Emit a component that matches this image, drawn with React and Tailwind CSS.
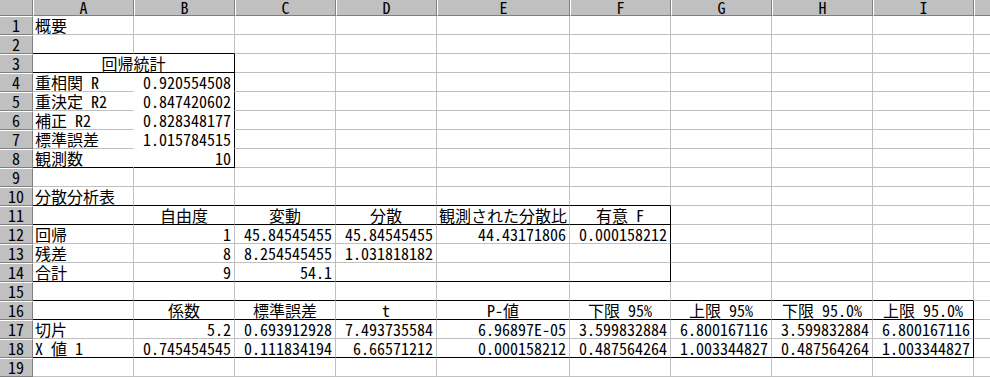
import React from "react";

const COLS = ["A", "B", "C", "D", "E", "F", "G", "H", "I", "J"];

// cell contents: [row, col] -> { v, align }
const L = (v) => ({ v, align: "left" });
const R = (v) => ({ v, align: "right" });
const C = (v) => ({ v, align: "center" });

const DATA = {
  1: { 0: L("概要") },
  4: { 0: L("重相関 R"), 1: R("0.920554508") },
  5: { 0: L("重決定 R2"), 1: R("0.847420602") },
  6: { 0: L("補正 R2"), 1: R("0.828348177") },
  7: { 0: L("標準誤差"), 1: R("1.015784515") },
  8: { 0: L("観測数"), 1: R("10") },
  10: { 0: L("分散分析表") },
  11: { 1: C("自由度"), 2: C("変動"), 3: C("分散"), 4: C("観測された分散比"), 5: C("有意 F") },
  12: {
    0: L("回帰"),
    1: R("1"),
    2: R("45.84545455"),
    3: R("45.84545455"),
    4: R("44.43171806"),
    5: R("0.000158212"),
  },
  13: { 0: L("残差"), 1: R("8"), 2: R("8.254545455"), 3: R("1.031818182") },
  14: { 0: L("合計"), 1: R("9"), 2: R("54.1") },
  16: {
    1: C("係数"),
    2: C("標準誤差"),
    3: C("t"),
    4: C("P-値"),
    5: C("下限 95%"),
    6: C("上限 95%"),
    7: C("下限 95.0%"),
    8: C("上限 95.0%"),
  },
  17: {
    0: L("切片"),
    1: R("5.2"),
    2: R("0.693912928"),
    3: R("7.493735584"),
    4: R("6.96897E-05"),
    5: R("3.599832884"),
    6: R("6.800167116"),
    7: R("3.599832884"),
    8: R("6.800167116"),
  },
  18: {
    0: L("X 値 1"),
    1: R("0.745454545"),
    2: R("0.111834194"),
    3: R("6.66571212"),
    4: R("0.000158212"),
    5: R("0.487564264"),
    6: R("1.003344827"),
    7: R("0.487564264"),
    8: R("1.003344827"),
  },
};

// which side of a cell gets a black rule (table borders), white (hidden grid) or the grey grid
const bottomClass = (r, c) => {
  if ([2, 3, 8].includes(r) && c <= 1) return "border-b-black";
  if ([10, 11, 14].includes(r) && c <= 5) return "border-b-black";
  if ([15, 16, 18].includes(r) && c <= 8) return "border-b-black";
  if (r >= 4 && r <= 7 && c === 1) return "border-b-white";
  return "border-b-[#c0c0c0]";
};

const rightClass = (r, c) => {
  if (c === 1 && r >= 3 && r <= 8) return "border-r-black";
  if (c === 5 && r >= 11 && r <= 14) return "border-r-black";
  if (c === 8 && r >= 16 && r <= 18) return "border-r-black";
  if (c === 0 && r >= 3 && r <= 8) return "border-r-white";
  return "border-r-[#c0c0c0]";
};

const alignClass = {
  left: "justify-start pl-[2px]",
  right: "justify-end pr-[3px]",
  center: "justify-center",
};

const Cell = ({ r, c }) => {
  const cell = DATA[r] && DATA[r][c];
  return (
    <div
      className={`flex overflow-visible whitespace-pre bg-white border-b border-r leading-[19px] ${bottomClass(r, c)} ${rightClass(r, c)} ${
        cell ? alignClass[cell.align] : ""
      }`}
    >
      {cell ? cell.v : ""}
    </div>
  );
};

const App = () => {
  const rows = Array.from({ length: 19 }, (_, i) => i + 1);

  return (
    <div className="w-[990px] h-[377px] overflow-hidden bg-white text-black text-[16px] font-['Noto_Sans_Mono_CJK_JP','Liberation_Mono',monospace]">
      <div className="grid grid-cols-[33px_101px_101px_101px_101px_133px_101px_101px_101px_101px_101px] grid-rows-[16px_repeat(19,19px)]">
        {/* column headers */}
        <div className="bg-[#c0c0c0] border-b border-r border-b-[#808080] border-r-[#808080]" />
        {COLS.map((col) => (
          <div
            key={col}
            className="flex justify-center bg-[#c0c0c0] border-b border-r border-l border-b-[#808080] border-r-[#808080] border-l-white leading-[15px]"
          >
            {col}
          </div>
        ))}

        {rows.map((r) => (
          <React.Fragment key={r}>
            <div className="flex justify-center bg-[#c0c0c0] border-b border-r border-t border-b-[#808080] border-r-[#808080] border-t-white leading-[17px]">
              {r}
            </div>
            {r === 3 ? (
              <>
                <div className="col-span-2 flex justify-center bg-white border-b border-r border-b-black border-r-black leading-[19px]">
                  回帰統計
                </div>
                {COLS.slice(2).map((_, i) => (
                  <Cell key={i + 2} r={r} c={i + 2} />
                ))}
              </>
            ) : (
              COLS.map((_, c) => <Cell key={c} r={r} c={c} />)
            )}
          </React.Fragment>
        ))}
      </div>
    </div>
  );
};

export default App;
